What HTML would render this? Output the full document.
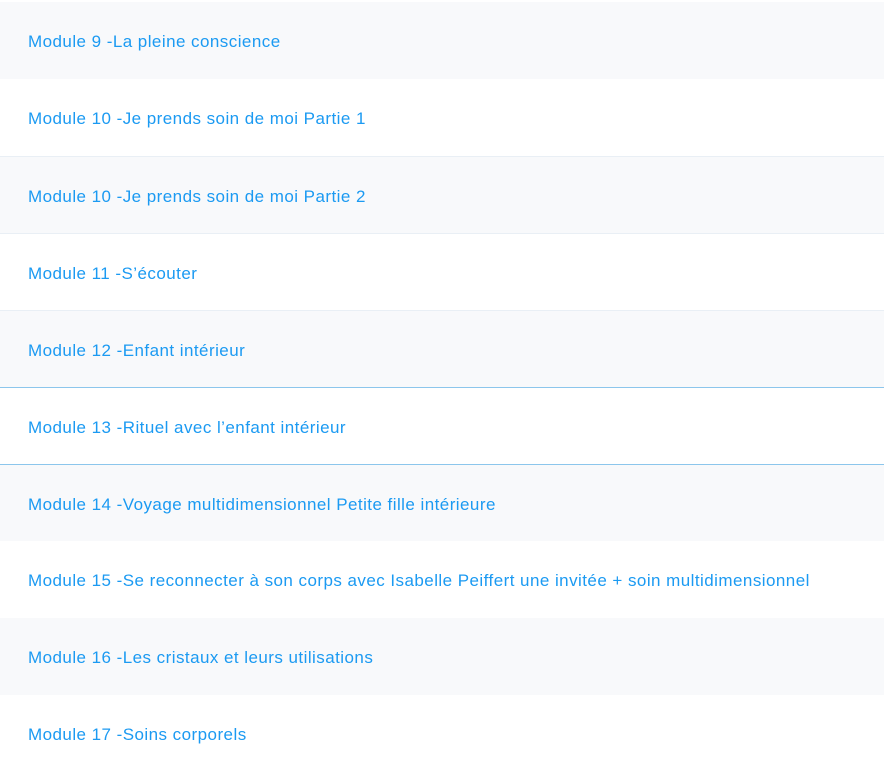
<!DOCTYPE html>
<html><head><meta charset="utf-8"><style>
body{margin:0;width:884px;height:756px;overflow:hidden;background:#fff;font-family:"Liberation Sans",sans-serif;}
.r{position:absolute;left:0;width:884px;height:77px;box-sizing:border-box;}
.r span{position:absolute;left:28px;top:30px;font-size:17px;color:#1b9af2;white-space:nowrap;letter-spacing:0.45px;}
.l{background:#f8f9fb;}
.b{border-top:1px solid #e9eff5;}
.hb{border-top:1px solid #8cc6ec;}
</style></head><body>
<div class="r l" style="top:2px"><span>Module 9 -La pleine conscience</span></div>
<div class="r" style="top:79px"><span>Module 10 -Je prends soin de moi Partie 1</span></div>
<div class="r l b" style="top:156px"><span>Module 10 -Je prends soin de moi Partie 2</span></div>
<div class="r b" style="top:233px"><span>Module 11 -S’écouter</span></div>
<div class="r l b" style="top:310px"><span>Module 12 -Enfant intérieur</span></div>
<div class="r hb" style="top:387px"><span>Module 13 -Rituel avec l’enfant intérieur</span></div>
<div class="r l hb" style="top:464px"><span>Module 14 -Voyage multidimensionnel Petite fille intérieure</span></div>
<div class="r" style="top:541px"><span>Module 15 -Se reconnecter à son corps avec Isabelle Peiffert une invitée + soin multidimensionnel</span></div>
<div class="r l" style="top:618px"><span>Module 16 -Les cristaux et leurs utilisations</span></div>
<div class="r" style="top:695px"><span>Module 17 -Soins corporels</span></div>
</body></html>
